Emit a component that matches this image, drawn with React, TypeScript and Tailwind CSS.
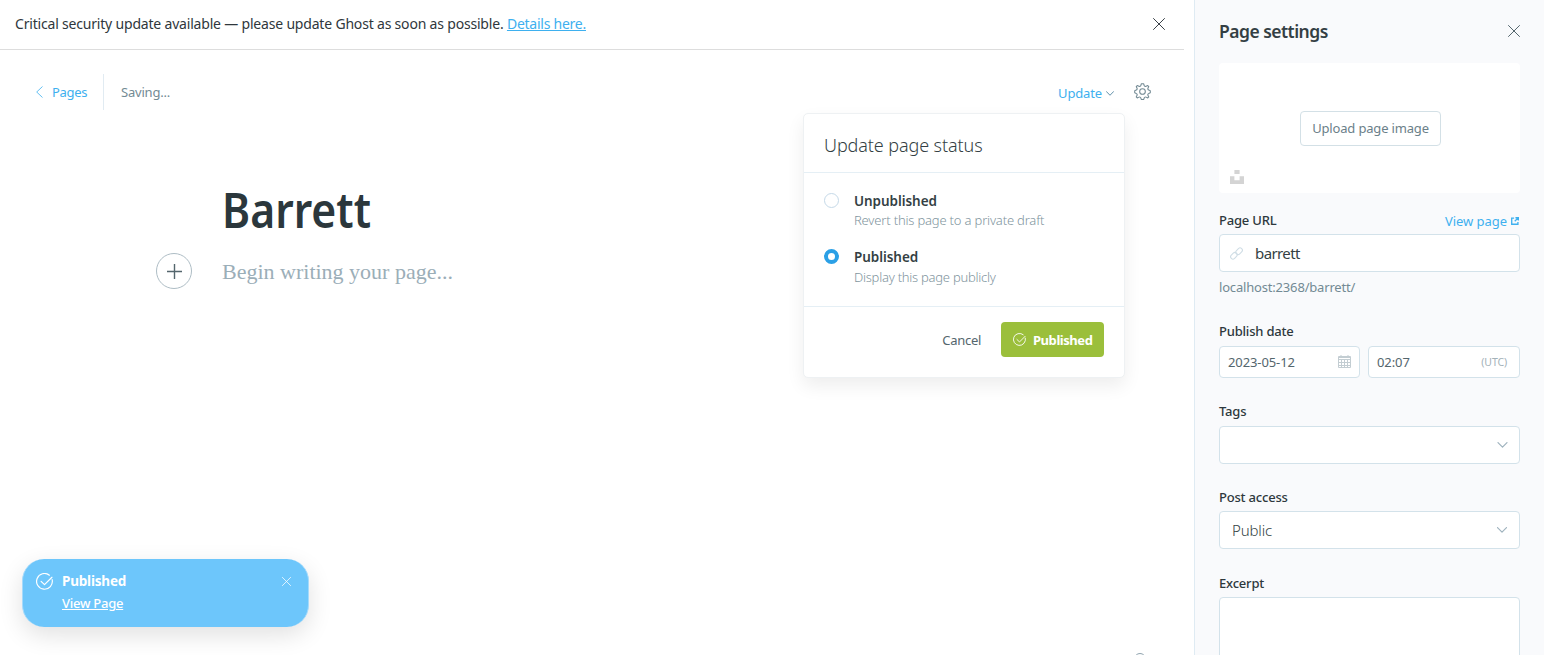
import React from 'react';

type IconProps = { className?: string };

function CloseIcon({ className }: IconProps) {
  return (
    <svg viewBox="0 0 12 12" className={className} fill="none" stroke="currentColor" strokeLinecap="round">
      <path d="M.5.5l11 11M11.5.5l-11 11" />
    </svg>
  );
}

function ChevronDown({ className }: IconProps) {
  return (
    <svg viewBox="0 0 10 6" className={className} fill="none" stroke="currentColor" strokeWidth="1.2" strokeLinecap="round" strokeLinejoin="round">
      <path d="M.5.6L5 5.2 9.5.6" />
    </svg>
  );
}

function CheckCircle({ className }: IconProps) {
  return (
    <svg viewBox="0 0 16 16" className={className} fill="none" stroke="currentColor" strokeWidth="1.1" strokeLinecap="round" strokeLinejoin="round">
      <path d="M15.2 6.3A7.4 7.4 0 1 1 12.6 2.1" />
      <path d="M15 4L8 11 4.8 7.9" />
    </svg>
  );
}

function GearIcon({ className }: IconProps) {
  return (
    <svg viewBox="0 0 24 24" className={className} fill="none" stroke="currentColor" strokeWidth="1.5" strokeLinejoin="round">
      <circle cx="12" cy="12" r="4" />
      <path d="M13.55 1l.85 2.55c.4 1.1 1.6 1.65 2.65 1.15l2.4-1.15 1.4 1.4-1.15 2.4c-.5 1.05.05 2.25 1.15 2.65l2.15.8v3.1l-2.15.85c-1.1.4-1.65 1.6-1.15 2.65l1.15 2.3-1.4 1.4-2.4-1.150c-1.050-.5-2.250.050-2.650 1.150l-.85 2.350h-3.100l-.85-2.350c-.4-1.100-1.600-1.650-2.650-1.150l-2.400 1.150-1.400-1.400 1.150-2.300c.5-1.050-.05-2.250-1.150-2.650L1 13.900v-3.100l2.150-.8c1.100-.4 1.650-1.600 1.150-2.650l-1.150-2.400 1.400-1.400 2.400 1.150c1.050.5 2.250-.05 2.650-1.150L10.450 1z" />
    </svg>
  );
}

function LinkIcon({ className }: IconProps) {
  return (
    <svg viewBox="0 0 24 24" className={className} fill="none" stroke="currentColor" strokeWidth="2" strokeLinecap="round">
      <rect x="10" y="3.5" width="13.5" height="8.5" rx="4.25" transform="rotate(-45 16.75 7.75)" />
      <rect x=".5" y="12" width="13.5" height="8.5" rx="4.25" transform="rotate(-45 7.25 16.25)" />
    </svg>
  );
}

function CalendarIcon({ className }: IconProps) {
  return (
    <svg viewBox="0 0 13 13" className={className} fill="none" stroke="currentColor">
      <path d="M.5 1.5h12v11H.5zM.5 2.5h12M.5 4.5h12M.5 7.5h12M.5 10.5h12M3.5 4v8.5M6.5 4v8.5M9.5 4v8.5M3 0v3M10 0v3" />
    </svg>
  );
}

function UnsplashIcon({ className }: IconProps) {
  return (
    <svg viewBox="0 0 14 14" className={className} fill="currentColor">
      <path d="M4.4 0h5.2v4H4.4zM0 6.2h4.4v4h5.2v-4H14V14H0z" />
    </svg>
  );
}

function ExternalIcon({ className }: IconProps) {
  return (
    <svg viewBox="0 0 9 9" className={className} fill="none" stroke="currentColor" strokeWidth="1.5">
      <path d="M3.5 1.2H.8v7h7V5.5M5 .8h3.3V4M8 1L4.2 4.8" />
    </svg>
  );
}

function Banner() {
  return (
    <div className="flex h-[50px] w-[1184px] items-center justify-between border-b border-[#dddddd] pr-[19px] pb-[2px] pl-[15px] text-[14px] text-[#2f373c]">
      <p className="-mt-px tracking-[-0.19px] whitespace-nowrap">
        <span>Critical security update available — please update Ghost as soon as possible.</span>{' '}
        <a className="tracking-[-0.25px] text-[#3eb0ef] underline">Details here.</a>
      </p>
      <CloseIcon className="size-3 text-[#394047]" />
    </div>
  );
}

type OptionProps = { title: string; note: string; checked?: boolean };

function StatusOption({ title, note, checked }: OptionProps) {
  return (
    <div className="flex">
      <span
        className={
          checked
            ? 'size-[15px] rounded-full border-[4px] border-[#2ba0e6] bg-white'
            : 'size-[15px] rounded-full border border-[#c5d9e8] bg-white'
        }
      />
      <div className="ml-[15px]">
        <div className="h-[17px] text-[13.5px] leading-4 font-semibold tracking-[-0.05px] text-[#343f44]">{title}</div>
        <div className={checked ? 'pt-px text-[13px] leading-5 font-light tracking-[-0.25px] text-[#7f959e]' : 'text-[13px] leading-5 font-light tracking-[-0.18px] text-[#7f959e]'}>
          {note}
        </div>
      </div>
    </div>
  );
}

function StatusMenu() {
  return (
    <div className="absolute top-[39px] -right-[11px] w-[322px] rounded-[5px] border border-[#eef1f3] bg-white tracking-normal shadow-[0_8px_18px_rgba(0,0,0,0.07)]">
      <h2 className="flex h-[59px] items-center border-b border-[#e5eff5] px-5 pt-1 text-[18px] font-light tracking-[-0.1px] text-[#343f44]">
        Update page status
      </h2>
      <div className="flex h-[134px] flex-col gap-[19px] border-b border-[#e5eff5] px-5 pt-5">
        <StatusOption title="Unpublished" note="Revert this page to a private draft" />
        <StatusOption title="Published" note="Display this page publicly" checked />
      </div>
      <div className="flex h-[70px] items-start justify-end gap-5 px-5 pt-[15px] text-[13px]">
        <span className="flex h-[37px] items-center tracking-[-0.3px] text-[#54666d]">Cancel</span>
        <button className="flex h-[35px] w-[103px] items-center rounded-[4px] bg-[#9bbf3b] pl-3 font-bold tracking-[-0.45px] text-white">
          <CheckCircle className="mr-[7px] size-[13px]" />
          <span className="pt-0.5">Published</span>
        </button>
      </div>
    </div>
  );
}

function EditorHeader() {
  return (
    <header className="flex h-9 items-center justify-between pr-[34px] pl-9 text-[13px]">
      <div className="flex h-9 items-center">
        <svg viewBox="0 0 7 12" className="h-3 w-[7px] text-[#3eb0ef]" fill="none" stroke="currentColor" strokeWidth=".8">
          <path d="M6.5.5L.7 6l5.8 5.5" />
        </svg>
        <a className="ml-[9px] w-9 pt-0.5 tracking-[-0.3px] text-[#3eb0ef]">Pages</a>
        <span className="ml-[15px] h-9 w-px bg-[#e1ebf2]" />
        <span className="ml-[17px] pt-0.5 tracking-[-0.2px] text-[#738a94]">Saving...</span>
      </div>
      <div className="flex items-center">
        <div className="relative mr-5 flex h-9 items-center gap-1 pt-[3px] tracking-[-0.15px] text-[#3eb0ef]">
          Update
          <ChevronDown className="h-[5px] w-2 text-[#5a8ba5]" />
          <StatusMenu />
        </div>
        <GearIcon className="mb-px size-[17px] text-[#738a94]" />
      </div>
    </header>
  );
}

function Toast() {
  return (
    <div className="absolute top-[559px] left-[22px] flex h-[68px] w-[287px] rounded-[22px] border-x border-[#a5dafb] bg-[#6dc6fb] pl-[13px] text-white shadow-[0_8px_24px_rgba(0,0,0,0.12)]">
      <CheckCircle className="mt-3.5 size-[17px]" />
      <div className="ml-[9px] flex-1 pt-[13px]">
        <div className="h-[22px] text-[13.5px] leading-[18px] font-bold tracking-[-0.2px]">Published</div>
        <a className="block text-[13px] leading-[18px] font-medium tracking-[-0.25px] underline">View Page</a>
      </div>
      <CloseIcon className="mt-[18px] mr-[17px] size-[9px]" />
    </div>
  );
}

function Label({ children }: { children: React.ReactNode }) {
  return <div className="text-[13px] leading-4 font-medium tracking-[-0.2px] text-[#2d383d]">{children}</div>;
}

function Settings() {
  return (
    <aside className="h-[655px] w-[350px] shrink-0 overflow-hidden border-l border-[#dfebf3] bg-[#f9fafc] pr-6 pl-6">
      <div className="flex h-[63px] items-center justify-between">
        <h1 className="text-[17.5px] font-semibold tracking-[-0.52px] text-[#343f44]">Page settings</h1>
        <CloseIcon className="mb-0.5 size-3 text-[#54666d]" />
      </div>
      <div className="relative flex h-[130px] items-center justify-center rounded-[4px] bg-white pl-0.5">
        <button className="h-[35px] w-[141px] rounded-[4px] border border-[#d3e0e6] pt-0.5 text-[13px] tracking-[-0.17px] whitespace-nowrap text-[#6b8089]">
          Upload page image
        </button>
        <UnsplashIcon className="absolute bottom-[9px] left-[11px] size-3.5 text-[#d4d4d4]" />
      </div>

      <div className="mt-[19px] flex h-[22px] items-start justify-between">
        <Label>Page URL</Label>
        <a className="flex items-center gap-1 pt-px pr-px text-[13px] leading-4 tracking-[-0.05px] text-[#3eb0ef]">
          View page
          <ExternalIcon className="size-2" />
        </a>
      </div>
      <div className="flex h-[38px] items-center rounded-[4px] border border-[#d3e2ea] bg-white pl-2.5 text-[15px] tracking-[-0.6px] text-[#343f44]">
        <LinkIcon className="mr-3 size-[13px] text-[#cfdde5]" />
        barrett
      </div>
      <div className="mt-[7px] text-[13px] leading-4 tracking-[-0.18px] text-[#738a94]">localhost:2368/barrett/</div>

      <div className="mt-7 h-[23px]">
        <Label>Publish date</Label>
      </div>
      <div className="flex gap-2 text-[13px] tracking-[-0.1px] text-[#54666d]">
        <div className="flex h-8 w-[141px] items-center justify-between rounded-[4px] border border-[#d3e2ea] bg-white px-2">
          <span className="pt-0.5">2023-05-12</span>
          <CalendarIcon className="mb-px size-[13px] text-[#c3cdd2]" />
        </div>
        <div className="flex h-8 w-[152px] items-center justify-between rounded-[4px] border border-[#d3e2ea] bg-white pt-0.5 pr-3 pl-2">
          02:07
          <span className="text-[10.5px] text-[#a3b1b8]">(UTC)</span>
        </div>
      </div>

      <div className="mt-[25px] h-[23px]">
        <Label>Tags</Label>
      </div>
      <div className="flex h-[38px] items-center justify-end rounded-[4px] border border-[#d3e2ea] bg-white pr-[11px] pb-px">
        <ChevronDown className="h-[6px] w-[11px] text-[#9fb3be]" />
      </div>

      <div className="mt-[25px] h-[22px]">
        <Label>Post access</Label>
      </div>
      <div className="flex h-[38px] items-center justify-between rounded-[4px] border border-[#d3e2ea] bg-white pr-3 pl-3 text-[15px] font-light tracking-[-0.15px] text-[#343f44]">
        Public
        <ChevronDown className="h-[6px] w-2.5 text-[#9fb3be]" />
      </div>

      <div className="mt-[26px] h-[22px]">
        <Label>Excerpt</Label>
      </div>
      <div className="h-[90px] rounded-[4px] border border-[#d3e2ea] bg-white" />
    </aside>
  );
}

export default function App() {
  return (
    <div className="flex h-[655px] w-[1544px] overflow-hidden bg-white font-['Noto_Sans',sans-serif]">
      <main className="relative h-[655px] flex-1 overflow-hidden">
        <Banner />
        <div className="mt-6 w-[1185px]">
          <EditorHeader />
        </div>
        <div className="mt-[70px] pl-[222px]">
          <h1 className="h-[60px] origin-left scale-x-[0.89] text-[48px] leading-[60px] font-semibold text-[#2b373c]">
            Barrett
          </h1>
        </div>
        <div className="mt-[13px] flex h-9 items-center pl-[156px]">
          <span className="flex size-9 items-center justify-center rounded-full border border-[#aebdc5]">
            <svg viewBox="0 0 15 15" className="size-[15px] text-[#54666d]" stroke="currentColor" strokeWidth="1.4">
              <path d="M7.5 0v15M0 7.5h15" />
            </svg>
          </span>
          <p className="ml-[30px] pt-px font-['Liberation_Serif',serif] text-[22px] text-[#9baeb8]">Begin writing your page...</p>
        </div>
        <Toast />
        <span className="absolute top-[653px] left-[1134px] size-3 rounded-full border border-[#8fa3ae]" />
      </main>
      <Settings />
    </div>
  );
}
